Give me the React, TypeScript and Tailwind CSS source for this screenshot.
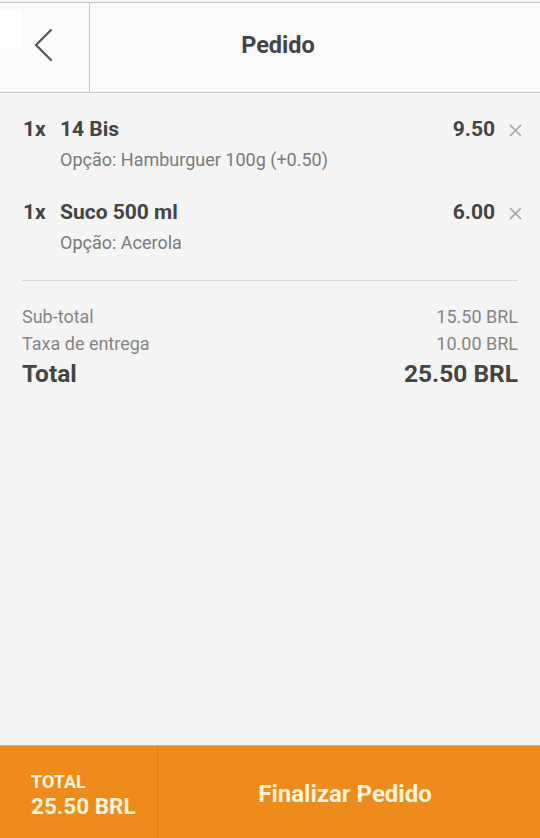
import React from 'react';

const items = [
  { qty: '1x', name: '14 Bis', option: 'Opção: Hamburguer 100g (+0.50)', price: '9.50' },
  { qty: '1x', name: 'Suco 500 ml', option: 'Opção: Acerola', price: '6.00' },
];

const font = { fontFamily: 'Roboto, "Liberation Sans", sans-serif' };

const App = () => {
  return (
    <div className="relative h-[838px] w-[540px] flex flex-col bg-[#f4f4f4] overflow-hidden" style={font}>
      {/* header */}
      <div className="mt-[2px] h-[91px] flex bg-[#fafafa] border-y border-[#c6c6c6]">
        <div className="w-[90px] shrink-0 flex items-center justify-center border-r border-[#c6c6c6]">
          <svg width="22" height="34" viewBox="0 0 22 34" fill="none" className="-ml-[1px] -mt-[5px]">
            <path d="M18 2 L3 17 L18 32" stroke="#555" strokeWidth="2.2" strokeLinecap="round" strokeLinejoin="round" />
          </svg>
        </div>
        <div className="flex-1 flex items-center justify-center pr-[74px] -mt-[4px]">
          <h1 className="text-[23.5px] font-bold text-[#444]">Pedido</h1>
        </div>
      </div>
      <div className="absolute left-0 top-[10px] w-[22px] h-[38px] bg-white" />

      {/* content */}
      <div className="flex-1 px-[22px] pt-[23px]">
        <div className="flex flex-col gap-[25px] -mr-[4px]">
          {items.map((item, i) => (
            <div key={i} className="flex flex-col">
              <div className="flex items-center h-[28px] text-[21px] font-bold text-[#444]">
                <span className="w-[38px] pl-[1px]">{item.qty}</span>
                <span className="flex-1">{item.name}</span>
                <span>{item.price}</span>
                <span className="ml-[14px] w-[13px] flex justify-center">
                  <svg width="13" height="13" viewBox="0 0 13 13">
                    <path d="M1 1 L12 12 M12 1 L1 12" stroke="#a3a3a3" strokeWidth="1.6" />
                  </svg>
                </span>
              </div>
              <div className="pl-[38px] mt-[2px] text-[18px] text-[#7a7a7a] leading-[28px]">{item.option}</div>
            </div>
          ))}
        </div>

        <div className="mt-[23px] border-t border-[#d9d9d9]" />

        <div className="mt-[22px] flex flex-col text-[18px] text-[#858585]">
          <div className="flex justify-between h-[27px] items-center">
            <span>Sub-total</span>
            <span>15.50 BRL</span>
          </div>
          <div className="flex justify-between h-[27px] items-center">
            <span>Taxa de entrega</span>
            <span>10.00 BRL</span>
          </div>
          <div className="flex justify-between h-[34px] items-center text-[24.5px] font-bold text-[#444]">
            <span>Total</span>
            <span>25.50 BRL</span>
          </div>
        </div>
      </div>

      {/* footer */}
      <div className="h-[93px] flex bg-[#ef8b1b] text-[#fff4dc] border-t border-[#f5a850]">
        <div className="w-[158px] shrink-0 flex flex-col justify-center pl-[31px] border-r border-[#e07f14] pt-[6px]">
          <span className="text-[18px] font-bold leading-[22px]">TOTAL</span>
          <span className="text-[22.5px] font-bold leading-[26px]">25.50 BRL</span>
        </div>
        <div className="flex-1 flex items-center justify-center pr-[8px] pt-[4px]">
          <span className="text-[24px] font-bold">Finalizar Pedido</span>
        </div>
      </div>
    </div>
  );
};

export default App;
